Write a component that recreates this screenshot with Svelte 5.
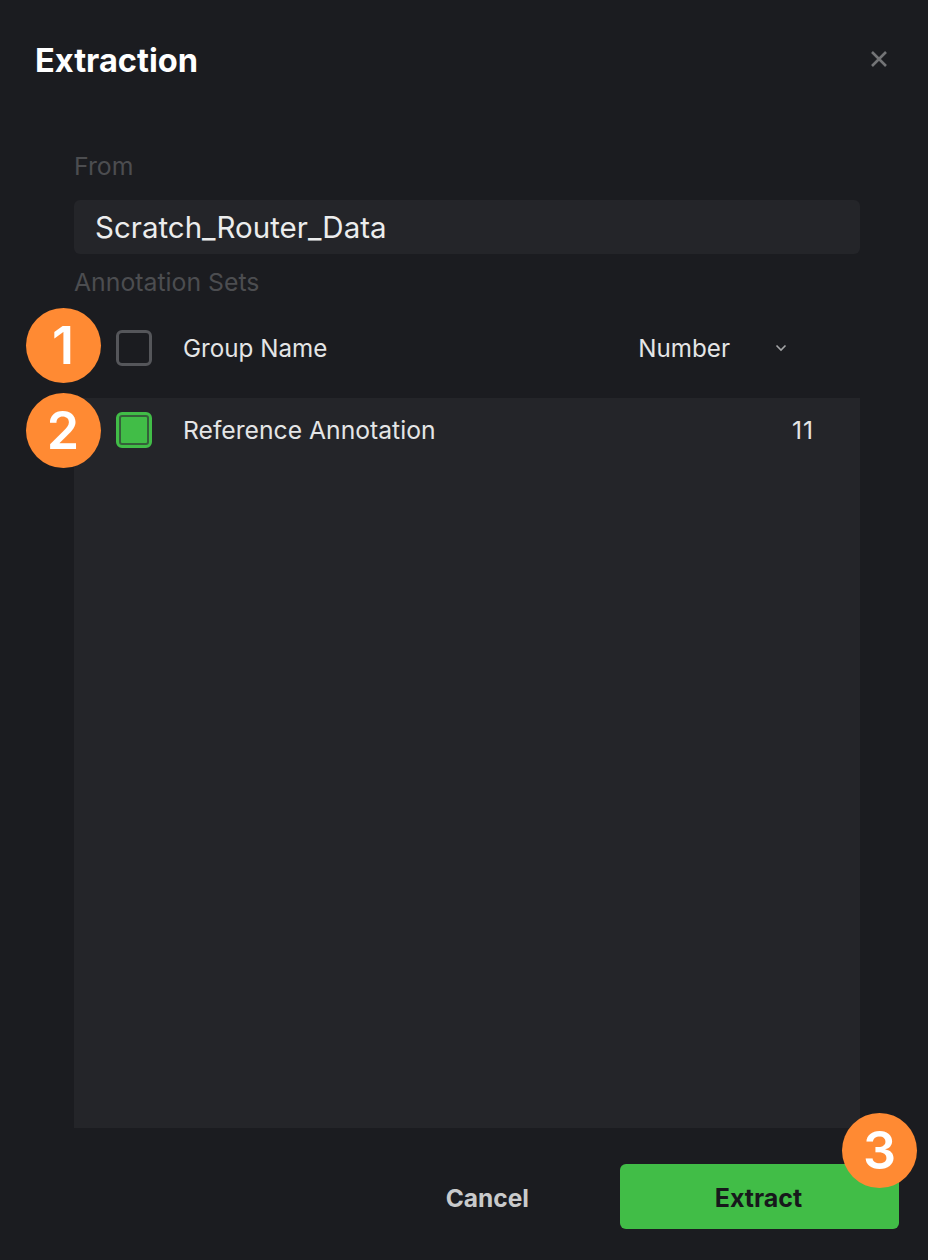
<script>
  const rows = [{ name: 'Reference Annotation', count: 11 }];
</script>

<div class="dialog">
  <header class="header">
    <h1 class="title">Extraction</h1>
    <button class="close" aria-label="Close">
      <svg width="18" height="18" viewBox="0 0 18 18"><path d="M2 2 L16 16 M16 2 L2 16" stroke="#737476" stroke-width="2.6" fill="none" /></svg>
    </button>
  </header>

  <div class="body">
    <div class="label from">From</div>
    <div class="field">Scratch_Router_Data</div>
    <div class="label sets">Annotation Sets</div>

    <div class="table-head">
      <span class="badge">1</span>
      <span class="check"></span>
      <span class="name">Group Name</span>
      <span class="number">Number</span>
      <svg class="chevron" width="12" height="8" viewBox="0 0 12 8"><path d="M1.5 1.5 L6 6 L10.5 1.5" stroke="#a4a5a7" stroke-width="1.6" fill="none" /></svg>
    </div>

    <div class="list">
      {#each rows as row}
        <div class="row">
          <span class="badge">2</span>
          <span class="check on"><i></i></span>
          <span class="name">{row.name}</span>
          <span class="count">{row.count}</span>
        </div>
      {/each}
    </div>
  </div>

  <footer class="footer">
    <button class="cancel">Cancel</button>
    <div class="extract-wrap">
      <button class="extract">Extract</button>
      <span class="badge">3</span>
    </div>
  </footer>
</div>

<style>
  :global(body) {
    margin: 0;
    background: #1b1c20;
  }

  .dialog {
    width: 928px;
    height: 1260px;
    box-sizing: border-box;
    display: flex;
    flex-direction: column;
    background: #1b1c20;
    font-family: Inter, "Liberation Sans", sans-serif;
    overflow: hidden;
  }

  .header {
    display: flex;
    justify-content: space-between;
    align-items: center;
    height: 40px;
    padding: 40px 40px 0 35px;
  }

  .title {
    margin: 0;
    font-size: 32.6px;
    font-weight: 700;
    color: #fff;
  }

  .close {
    display: flex;
    margin-top: -2px;
    padding: 0;
    background: none;
    border: 0;
  }

  .body {
    flex: 1;
    display: flex;
    flex-direction: column;
    padding: 0 68px 0 74px;
  }

  .label {
    font-size: 24.8px;
    line-height: 28px;
    color: #4c4d50;
  }

  .from {
    margin-top: 72px;
  }

  .field {
    margin-top: 20px;
    height: 54px;
    line-height: 54px;
    padding-left: 21px;
    background: #242529;
    border-radius: 6px;
    font-size: 29.5px;
    color: #eceded;
  }

  .sets {
    margin-top: 14px;
  }

  .table-head,
  .row {
    position: relative;
    display: flex;
    align-items: center;
    padding-left: 42px;
    color: #e4e5e6;
  }

  .table-head {
    box-sizing: border-box;
    height: 102px;
    padding-top: 2px;
    font-size: 24.2px;
  }

  .list {
    flex: 1;
    background: #242529;
  }

  .row {
    height: 64px;
    font-size: 24.7px;
  }

  .check {
    box-sizing: border-box;
    flex: none;
    width: 36px;
    height: 36px;
    border: 3px solid #55565a;
    border-radius: 6px;
    background: #1b1c20;
  }

  .check.on {
    display: flex;
    padding: 2px;
    border-color: #41bd47;
    background: #35603a;
  }

  .check.on i {
    flex: 1;
    background: #41bd47;
    border-radius: 1px;
  }

  .name {
    margin-left: 31px;
  }

  .number {
    margin-left: auto;
  }

  .chevron {
    margin: 0 73px 0 45px;
  }

  .count {
    margin-left: auto;
    margin-right: 46px;
    letter-spacing: 1px;
  }

  .badge {
    position: absolute;
    left: -48.5px;
    top: 50%;
    width: 75px;
    height: 75px;
    margin-top: -37.5px;
    display: flex;
    align-items: center;
    justify-content: center;
    border-radius: 50%;
    background: #ff8a33;
    color: #fff;
    font-family: Inter, "Liberation Sans", sans-serif;
    font-size: 52px;
    font-weight: 600;
  }

  .table-head .badge {
    margin-top: -39px;
  }

  .footer {
    display: flex;
    align-items: center;
    justify-content: flex-end;
    height: 132px;
    padding: 5px 29px 0 0;
    box-sizing: border-box;
  }

  .cancel {
    margin-right: 91px;
    padding: 2px 0 0;
    background: none;
    border: 0;
    font: 700 24.5px Inter, "Liberation Sans", sans-serif;
    color: #c9cacb;
  }

  .extract-wrap {
    position: relative;
  }

  .extract {
    display: block;
    width: 279px;
    height: 65px;
    padding: 2px 2px 0 0;
    border: 0;
    border-radius: 6px;
    background: #41bd47;
    font: 700 25px Inter, "Liberation Sans", sans-serif;
    color: #17181b;
  }

  .extract-wrap .badge {
    left: auto;
    right: -18px;
    top: -51px;
    margin-top: 0;
  }
</style>
